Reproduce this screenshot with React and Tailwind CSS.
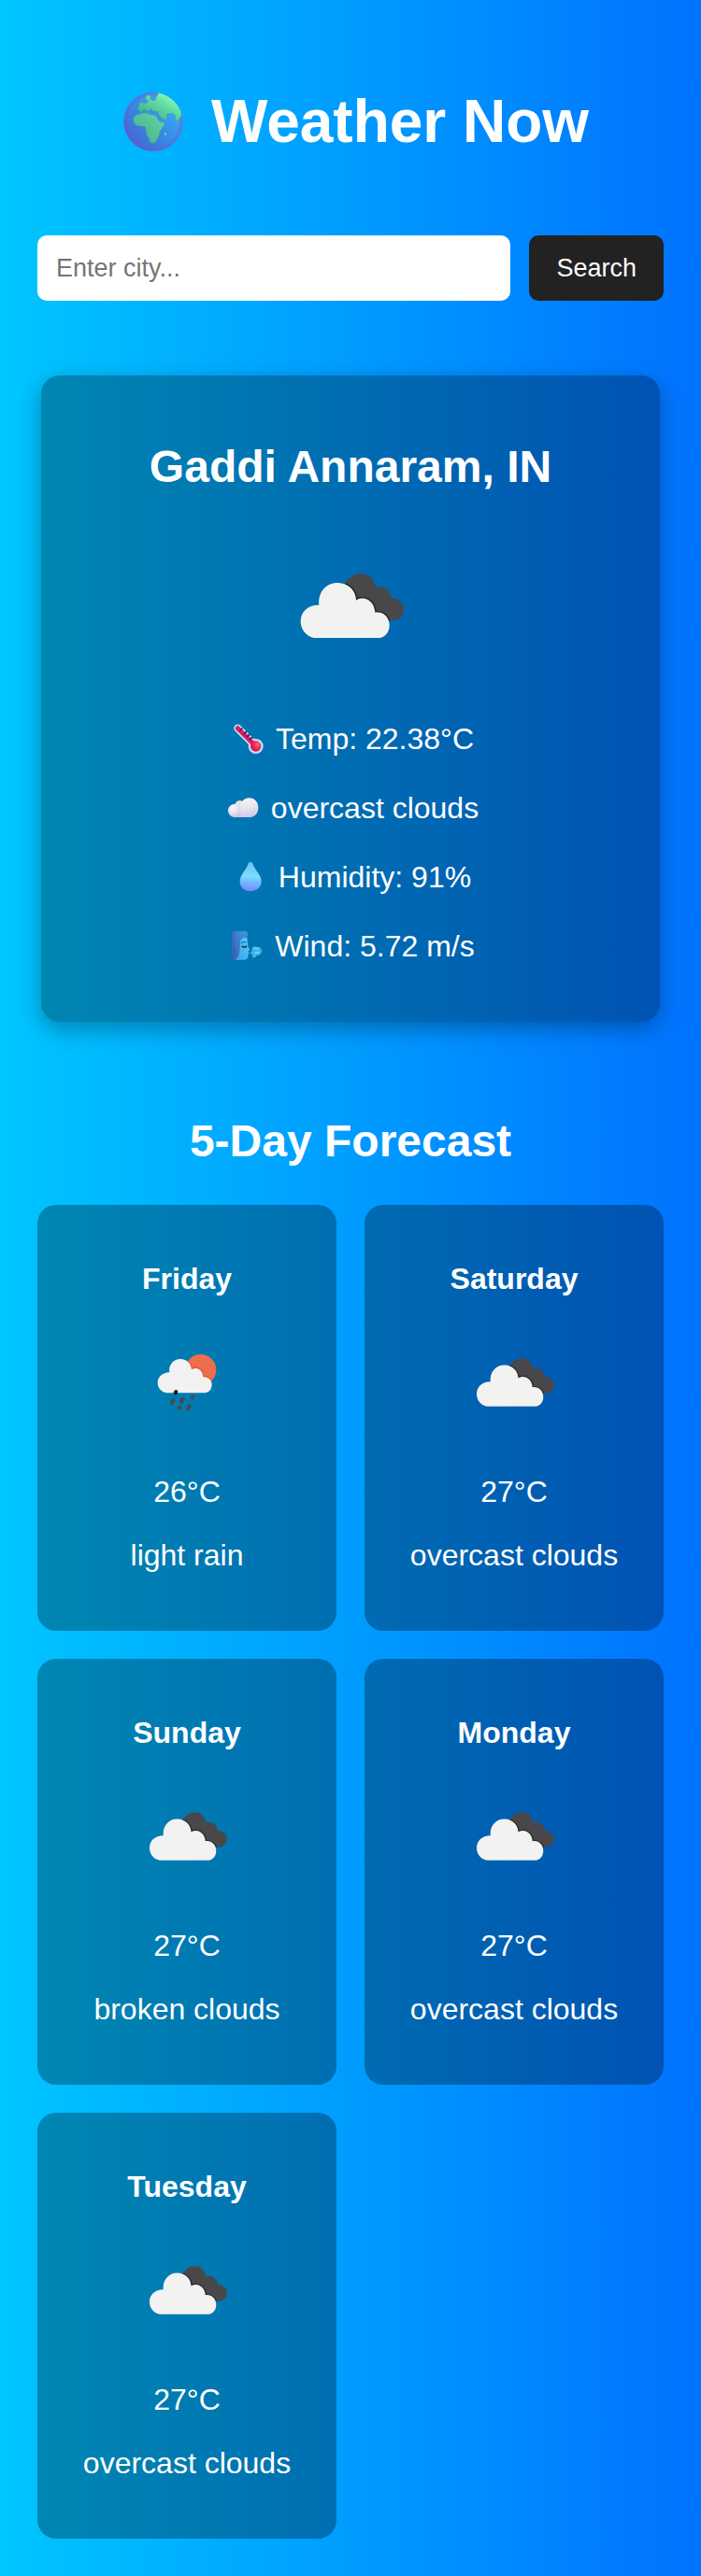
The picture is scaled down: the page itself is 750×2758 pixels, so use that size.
import { useId } from "react";

function Globe() {
  return (
    <svg className="h-16 w-[88px] shrink-0" viewBox="0 36 264 192" aria-hidden="true">
      <defs>
        <linearGradient id="sea" x1="0.1" y1="0.9" x2="0.85" y2="0.2">
          <stop offset="0" stopColor="#4a5fd0" />
          <stop offset="0.5" stopColor="#3489e6" />
          <stop offset="1" stopColor="#3fabf8" />
        </linearGradient>
        <radialGradient id="rim">
          <stop offset="0.82" stopColor="#6a5fc8" stopOpacity="0" />
          <stop offset="1" stopColor="#6a5fc8" stopOpacity="0.6" />
        </radialGradient>
        <linearGradient id="land" x1="0" y1="1" x2="1" y2="0">
          <stop offset="0" stopColor="#3f9f80" />
          <stop offset="0.55" stopColor="#62dca6" />
          <stop offset="0.75" stopColor="#7affb2" />
        </linearGradient>
        <linearGradient id="africa" x1="0" y1="1" x2="1" y2="0">
          <stop offset="0" stopColor="#4aa888" />
          <stop offset="1" stopColor="#62d8a6" />
        </linearGradient>
        <clipPath id="disc"><circle cx="132" cy="133" r="94" /></clipPath>
      </defs>
      <circle cx="132" cy="133" r="95" fill="url(#sea)" />
      <circle cx="132" cy="133" r="95" fill="url(#rim)" />
      <g clipPath="url(#disc)" fill="url(#land)" stroke="#3b9a9a" strokeWidth="1.5" strokeLinejoin="round">
        <path d="M84 94C80 86 88 84 87 76C88 70 95 70 100 72L108 74C116 70 118 62 110 64C104 60 106 48 116 47C124 46 124 54 124 62L136 66C142 60 138 52 152 38L200 42L240 100L226 105C220 116 214 130 207 132C202 128 204 116 200 110C192 104 186 106 178 108C170 114 182 122 174 126C164 128 150 116 150 108C144 104 150 98 138 100C132 104 128 92 122 92C116 96 122 102 114 100C108 94 100 90 98 98C92 104 90 102 84 94Z" />
        <path d="M68 124C70 112 82 108 94 107C102 104 110 104 116 106C118 113 128 108 136 112C144 114 146 126 152 132C160 136 168 132 168 140C166 150 156 156 152 168C152 180 146 184 142 194C136 204 124 204 120 196C120 184 112 180 110 174C112 164 104 154 106 150C96 144 88 150 78 145C70 140 66 132 68 124Z" fill="url(#africa)" />
        <path d="M167 172C168 167 174 166 174 170C174 177 171 182 168 180Z" />
      </g>
    </svg>
  );
}

function Thermometer() {
  return (
    <svg className="h-8 w-11 shrink-0" viewBox="36 45 132 96" aria-hidden="true">
      <defs>
        <radialGradient id="bulb" cx="0.65" cy="0.35">
          <stop offset="0" stopColor="#ff7a80" />
          <stop offset="0.5" stopColor="#ff3150" />
          <stop offset="1" stopColor="#d91c50" />
        </radialGradient>
      </defs>
      <path d="M70 59L122 111" stroke="#c3dcf7" strokeWidth="25" strokeLinecap="round" />
      <circle cx="128" cy="117" r="24" fill="#c3dcf7" />
      <path d="M70 59L122 111" stroke="#e01a68" strokeWidth="15" strokeLinecap="round" />
      <circle cx="128" cy="117" r="17" fill="url(#bulb)" />
      <path d="M78 66L84 60M90 78L97 71M100 86L107 80M109 95L116 89" stroke="#3d2049" strokeWidth="5" strokeLinecap="round" />
    </svg>
  );
}

function SoftCloud() {
  return (
    <svg className="h-8 w-11 shrink-0" viewBox="21 267 132 96" aria-hidden="true">
      <defs>
        <linearGradient id="puff" x1="0.4" y1="0" x2="0.6" y2="1">
          <stop offset="0" stopColor="#f8f5f6" />
          <stop offset="0.5" stopColor="#e9e5ef" />
          <stop offset="1" stopColor="#cfc3ee" />
        </linearGradient>
        <radialGradient id="puffSmall" cx="0.35" cy="0.3" r="0.7">
          <stop offset="0" stopColor="#fbf9fa" />
          <stop offset="0.6" stopColor="#e4e0ea" />
          <stop offset="1" stopColor="#cfc3e6" />
        </radialGradient>
      </defs>
      <circle cx="76" cy="305" r="14" fill="#e6e0de" />
      <path d="M62 345C50 345 39 336 39 323C39 310 50 302 62 302C75 302 84 312 84 324L82 345Z" fill="url(#puffSmall)" />
      <path d="M76 345C81 336 80 325 79 317C76 300 88 283 107 283C124 283 136 296 136 314C136 332 124 345 107 345Z" fill="url(#puff)" />
    </svg>
  );
}

function Droplet() {
  return (
    <svg className="h-8 w-11 shrink-0" viewBox="46 489 132 96" aria-hidden="true">
      <defs>
        <linearGradient id="water" x1="0.5" y1="0" x2="0.45" y2="1">
          <stop offset="0" stopColor="#6fc3f0" />
          <stop offset="0.5" stopColor="#7cdcff" />
          <stop offset="0.72" stopColor="#74b4ff" />
          <stop offset="1" stopColor="#7a86ff" />
        </linearGradient>
      </defs>
      <path d="M112 489C118 489 119 494 122 501C129 518 147 532 147 551C147 570 132 582 112 582C92 582 78 570 78 551C78 532 95 518 102 501C105 494 106 489 112 489Z" fill="url(#water)" />
    </svg>
  );
}

function WindFace() {
  return (
    <svg className="h-8 w-11 shrink-0" viewBox="36 711 132 96" aria-hidden="true">
      <defs>
        <linearGradient id="hair" x1="1" y1="0" x2="0" y2="1">
          <stop offset="0" stopColor="#3d97da" />
          <stop offset="0.5" stopColor="#3c7dcc" />
          <stop offset="1" stopColor="#3a5fb4" />
        </linearGradient>
        <linearGradient id="skin" x1="0" y1="1" x2="1" y2="0">
          <stop offset="0" stopColor="#3aa2e4" />
          <stop offset="1" stopColor="#58ccf8" />
        </linearGradient>
      </defs>
      <path d="M54 711H98C104 711 106 716 105 722C105 728 102 731 97 732L70 803H54Z" fill="url(#hair)" />
      <path d="M82 742C84 735 92 731 103 731C105 745 104 755 108 764L112 771L106 776L110 782L106 786V794C104 801 99 803 92 803H64C76 795 80 780 80 762Z" fill="url(#skin)" />
      <path d="M54 711H62C62 748 72 780 66 803H54Z" fill="#315cae" opacity="0.35" />
      <path d="M85 750Q91 742 100 747" fill="none" stroke="#2668b4" strokeWidth="4" />
      <path d="M87 759Q94 765 102 759" fill="none" stroke="#26334d" strokeWidth="5" />
      <path d="M110 779C116 780 119 776 119 770C118 760 128 757 134 762C143 759 150 767 150 775C150 785 142 790 135 788C130 799 118 798 120 789C120 784 114 783 110 779Z" fill="#41b2e6" />
      <path d="M124 768Q134 762 139 770M127 784Q133 776 142 782" fill="none" stroke="#78d8fa" strokeWidth="4" />
    </svg>
  );
}

const FRONT_CLOUD =
  "M78 249C50 243 35 220 35 196C35 165 58 143 94 143C90 103 116 72 154 72C188 72 213 98 213 128C236 112 272 128 274 167C300 163 320 183 320 208C320 230 308 245 290 249Z";
const BACK_CLOUD =
  "M170 90C184 55 205 43 230 43C255 43 272 62 276 87C300 78 325 95 328 123C350 122 366 137 366 158C366 180 348 194 326 192L250 220L180 160Z";

function CloudsIcon({ className }) {
  const id = useId();
  return (
    <svg className={className} viewBox="-45 -90 480 480" role="img" aria-label="Clouds">
      <clipPath id={id}><path d={BACK_CLOUD} /></clipPath>
      <path d={BACK_CLOUD} fill="#48484a" />
      <path d={FRONT_CLOUD} fill="none" stroke="#252527" strokeWidth="9" clipPath={`url(#${id})`} />
      <path d={FRONT_CLOUD} fill="#f2f2f0" />
    </svg>
  );
}

function RainIcon({ className }) {
  return (
    <svg className={className} viewBox="-30 -27 360 360" role="img" aria-label="Rain">
      <defs>
        <clipPath id="sunDisc"><circle cx="194" cy="110" r="50" /></clipPath>
        <path id="rainCloud" d="M85 184C67 181 56 168 56 151C56 133 72 119 94 118C90 95 106 75 129 75C150 75 164 91 165 109C182 98 201 110 202 133C218 131 230 143 230 157C230 172 220 184 207 184Z" />
      </defs>
      <circle cx="194" cy="110" r="50" fill="#ec6e4c" />
      <use href="#rainCloud" fill="none" stroke="#e8502f" strokeWidth="6" clipPath="url(#sunDisc)" />
      <use href="#rainCloud" fill="#f2f2f2" />
      <g stroke="#4a4a4c" strokeWidth="12" strokeLinecap="round">
        <path d="M106 207L101 217M137 203L132 213M169 197L167 200M127 230L125 232M158 226L153 236" />
        <path d="M115 180L113 184" stroke="#1c1c1e" />
      </g>
    </svg>
  );
}

const conditions = [
  { Icon: Thermometer, text: "Temp: 22.38°C" },
  { Icon: SoftCloud, text: "overcast clouds" },
  { Icon: Droplet, text: "Humidity: 91%" },
  { Icon: WindFace, text: "Wind: 5.72 m/s" },
];

const forecast = [
  { day: "Friday", temp: "26°C", text: "light rain", Icon: RainIcon },
  { day: "Saturday", temp: "27°C", text: "overcast clouds", Icon: CloudsIcon },
  { day: "Sunday", temp: "27°C", text: "broken clouds", Icon: CloudsIcon },
  { day: "Monday", temp: "27°C", text: "overcast clouds", Icon: CloudsIcon },
  { day: "Tuesday", temp: "27°C", text: "overcast clouds", Icon: CloudsIcon },
];

export default function App() {
  return (
    <main className="min-h-screen bg-[linear-gradient(to_right,#00c6ff,#0072ff)] px-10 pt-[94px] pb-10 text-center font-['Liberation_Sans',Arial,sans-serif] text-[32px] leading-9 text-white">
      <h1 className="mb-[86px] flex items-center justify-center gap-[18px] text-[64px] leading-[72px] font-bold">
        <Globe />
        Weather Now
      </h1>

      <form className="flex gap-5 text-[27px] leading-[30px]" onSubmit={(e) => e.preventDefault()}>
        <input
          type="text"
          aria-label="City"
          placeholder="Enter city..."
          className="min-w-0 flex-1 rounded-[10px] bg-white p-5 text-black outline-none placeholder:text-[#757575]"
        />
        <button type="submit" className="cursor-pointer rounded-[10px] bg-[#222222] px-[29px] py-5">
          Search
        </button>
      </form>

      <section className="mx-1 mt-20 rounded-[20px] bg-black/30 px-10 pt-[70px] pb-[60px] shadow-[0_8px_24px_rgba(0,0,0,0.3)]">
        <h2 className="text-5xl leading-[56px] font-bold">Gaddi Annaram, IN</h2>
        <CloudsIcon className="mx-auto mt-[42px] mb-10 size-40" />
        <div className="flex flex-col gap-8 leading-[42px]">
          {conditions.map(({ Icon, text }) => (
            <p key={text} className="flex items-center justify-center gap-2">
              <Icon />
              {text}
            </p>
          ))}
        </div>
      </section>

      <h2 className="mt-[100px] mb-10 text-5xl leading-[56px] font-bold">5-Day Forecast</h2>

      <section className="grid grid-cols-2 gap-[30px]">
        {forecast.map(({ day, temp, text, Icon }) => (
          <article key={day} className="rounded-[20px] bg-black/30 px-5 pt-[61px] pb-[63px]">
            <h3 className="font-bold">{day}</h3>
            <Icon className="mx-auto mt-[34px] mb-[38px] size-[120px]" />
            <p className="mb-8">{temp}</p>
            <p>{text}</p>
          </article>
        ))}
      </section>
    </main>
  );
}
